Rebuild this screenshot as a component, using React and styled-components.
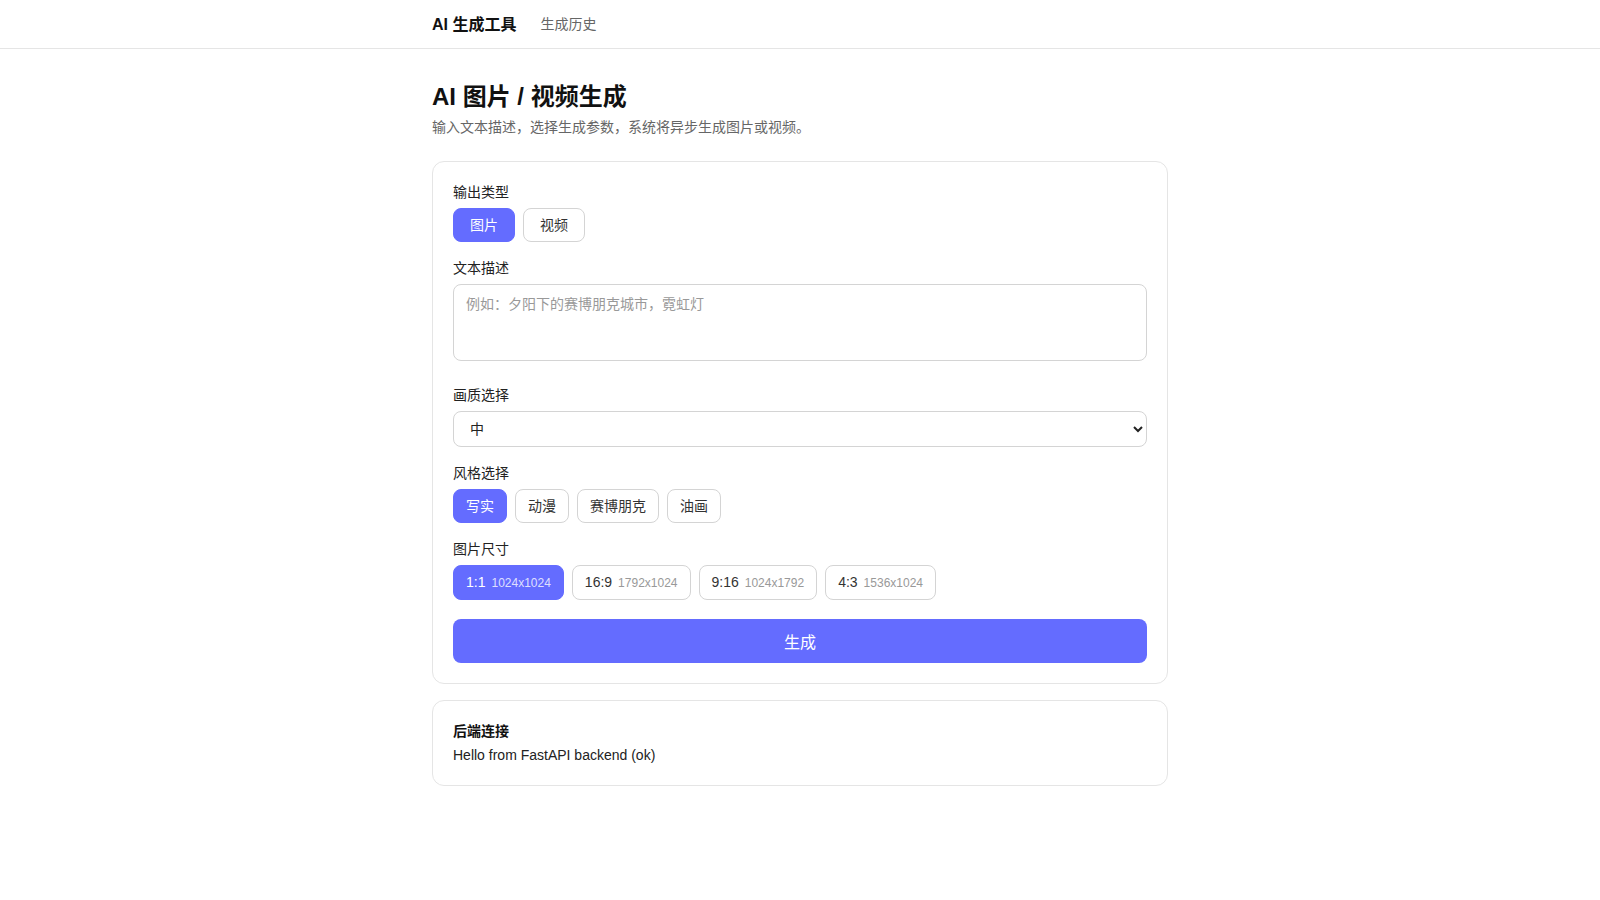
import { useState } from "react";
import styled, { createGlobalStyle } from "styled-components";

const GlobalStyle = createGlobalStyle`
  * {
    box-sizing: border-box;
  }
  body {
    margin: 0;
    background: #fff;
    color: #222;
    font-family: "Liberation Sans", Arial, "Noto Sans CJK SC", sans-serif;
    font-size: 14px;
  }
`;

const OUTPUT_TYPES = [
  { id: "image", label: "图片" },
  { id: "video", label: "视频" },
];

const STYLES = ["写实", "动漫", "赛博朋克", "油画"];

const SIZES = [
  { ratio: "1:1", px: "1024x1024" },
  { ratio: "16:9", px: "1792x1024" },
  { ratio: "9:16", px: "1024x1792" },
  { ratio: "4:3", px: "1536x1024" },
];

export default function App() {
  const [type, setType] = useState("image");
  const [style, setStyle] = useState("写实");
  const [size, setSize] = useState("1:1");
  const [quality, setQuality] = useState("medium");

  return (
    <>
      <GlobalStyle />
      <Header>
        <HeaderInner>
          <Brand>AI 生成工具</Brand>
          <NavLink>生成历史</NavLink>
        </HeaderInner>
      </Header>

      <Main>
        <Title>AI 图片 / 视频生成</Title>
        <Subtitle>输入文本描述，选择生成参数，系统将异步生成图片或视频。</Subtitle>

        <Card>
          <Field>
            <Label>输出类型</Label>
            <Options>
              {OUTPUT_TYPES.map((t) => (
                <Chip
                  key={t.id}
                  $wide
                  $active={type === t.id}
                  onClick={() => setType(t.id)}
                >
                  {t.label}
                </Chip>
              ))}
            </Options>
          </Field>

          <Field $extra>
            <Label>文本描述</Label>
            <Prompt placeholder="例如：夕阳下的赛博朋克城市，霓虹灯" />
          </Field>

          <Field>
            <Label>画质选择</Label>
            <Select value={quality} onChange={(e) => setQuality(e.target.value)}>
              <option value="low">低</option>
              <option value="medium">中</option>
              <option value="high">高</option>
            </Select>
          </Field>

          <Field>
            <Label>风格选择</Label>
            <Options>
              {STYLES.map((s) => (
                <Chip key={s} $active={style === s} onClick={() => setStyle(s)}>
                  {s}
                </Chip>
              ))}
            </Options>
          </Field>

          <Field>
            <Label>图片尺寸</Label>
            <Options>
              {SIZES.map((s) => (
                <Chip
                  key={s.ratio}
                  $active={size === s.ratio}
                  onClick={() => setSize(s.ratio)}
                >
                  {s.ratio}
                  <Pixels $active={size === s.ratio}>{s.px}</Pixels>
                </Chip>
              ))}
            </Options>
          </Field>

          <Submit>生成</Submit>
        </Card>

        <Card>
          <StatusTitle>后端连接</StatusTitle>
          <StatusText>Hello from FastAPI backend (ok)</StatusText>
        </Card>
      </Main>
    </>
  );
}

const Header = styled.header`
  height: 49px;
  border-bottom: 1px solid #e5e5e5;
`;

const HeaderInner = styled.div`
  max-width: 736px;
  height: 100%;
  margin: 0 auto;
  display: flex;
  align-items: center;
  gap: 24px;
  padding-bottom: 2px;
`;

const Brand = styled.span`
  font-size: 16px;
  font-weight: 700;
  color: #111;
`;

const NavLink = styled.span`
  font-size: 14px;
  color: #666;
  cursor: pointer;
`;

const Main = styled.main`
  max-width: 736px;
  margin: 0 auto;
  padding: 32px 0;
`;

const Title = styled.h1`
  margin: 0;
  font-size: 24px;
  line-height: 32px;
  font-weight: 700;
  color: #111;
`;

const Subtitle = styled.p`
  margin: 4px 0 24px;
  font-size: 14px;
  line-height: 20px;
  color: #666;
`;

const Card = styled.section`
  border: 1px solid #e5e5e5;
  border-radius: 12px;
  background: #fff;
  padding: 20px;
  margin-bottom: 16px;
`;

const Field = styled.div`
  margin-bottom: ${(p) => (p.$extra ? "24px" : "16px")};
`;

const Label = styled.div`
  font-size: 14px;
  line-height: 20px;
  color: #222;
  margin-bottom: 6px;
`;

const Options = styled.div`
  display: flex;
  gap: 8px;
`;

const Chip = styled.button`
  font-family: inherit;
  font-size: 14px;
  line-height: 20px;
  padding: 6px ${(p) => (p.$wide ? "16px" : "12px")};
  border-radius: 8px;
  border: 1px solid ${(p) => (p.$active ? "#646cff" : "#d4d4d4")};
  background: ${(p) => (p.$active ? "#646cff" : "#fff")};
  color: ${(p) => (p.$active ? "#fff" : "#333")};
  cursor: pointer;
  display: flex;
  align-items: baseline;
`;

const Pixels = styled.span`
  font-size: 12px;
  margin-left: 6px;
  color: ${(p) => (p.$active ? "rgba(255, 255, 255, 0.8)" : "#999")};
`;

const Prompt = styled.textarea`
  display: block;
  width: 100%;
  height: 77px;
  padding: 10px 12px;
  font-family: inherit;
  font-size: 14px;
  line-height: 18px;
  border: 1px solid #d4d4d4;
  border-radius: 8px;
  resize: none;

  &::placeholder {
    color: #999;
  }
`;

const Select = styled.select`
  display: block;
  width: 100%;
  height: 36px;
  padding: 0 12px;
  font-family: inherit;
  font-size: 14px;
  color: #222;
  background: #fff;
  border: 1px solid #d4d4d4;
  border-radius: 8px;
`;

const Submit = styled.button`
  display: block;
  width: 100%;
  height: 44px;
  margin-top: 19px;
  font-family: inherit;
  font-size: 16px;
  color: #fff;
  background: #646cff;
  border: none;
  border-radius: 8px;
  cursor: pointer;
`;

const StatusTitle = styled.div`
  font-size: 14px;
  line-height: 20px;
  font-weight: 700;
  color: #111;
`;

const StatusText = styled.div`
  font-size: 14px;
  line-height: 20px;
  color: #222;
  margin-top: 4px;
`;
